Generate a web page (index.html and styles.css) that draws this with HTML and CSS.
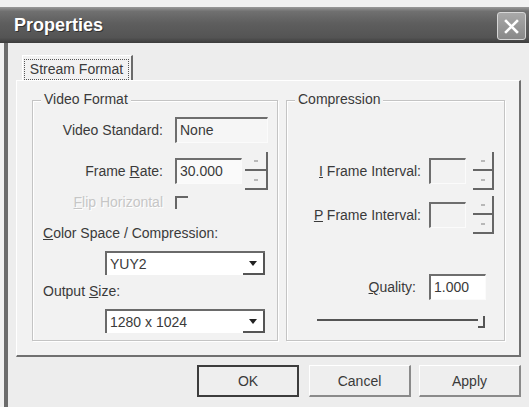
FILE: index.html
```html
<!DOCTYPE html>
<html>
<head>
<meta charset="utf-8">
<title>Properties</title>
<link rel="stylesheet" href="styles.css">
</head>
<body>
<div class="screen">
  <div class="titlebar">
    <span class="title">Properties</span>
    <button class="close" aria-label="Close">
      <svg width="17" height="17" viewBox="0 0 17 17"><path d="M3 3 L14 14 M14 3 L3 14" stroke="#fff" stroke-width="2.6" stroke-linecap="square"/></svg>
    </button>
  </div>
  <div class="frame">
    <div class="tabs">
      <div class="tab"><span class="focus">Stream Format</span></div>
    </div>
    <div class="panel">
      <div class="group video">
        <span class="legend">Video Format</span>
        <div class="vrow r1">
          <span class="vlabel">Video Standard:</span>
          <span class="edit readonly std">None</span>
        </div>
        <div class="vrow r2">
          <span class="vlabel">Frame <u>R</u>ate:</span>
          <span class="edit rate">30.000</span>
          <span class="spin big"><span></span><span></span></span>
        </div>
        <div class="vrow r3">
          <span class="vlabel disabled"><u>F</u>lip Horizontal</span>
          <span class="check"></span>
        </div>
        <div class="slabel first"><u>C</u>olor Space / Compression:</div>
        <div class="combo"><span class="ctext">YUY2</span><span class="cbtn"><svg width="8" height="5" viewBox="0 0 8 5"><path d="M0 0H8L4 5Z" fill="#222"/></svg></span></div>
        <div class="slabel">Output <u>S</u>ize:</div>
        <div class="combo"><span class="ctext">1280 x 1024</span><span class="cbtn"><svg width="8" height="5" viewBox="0 0 8 5"><path d="M0 0H8L4 5Z" fill="#222"/></svg></span></div>
      </div>
      <div class="group comp">
        <span class="legend">Compression</span>
        <div class="crow ri">
          <span class="clabel"><u>I</u> Frame Interval:</span>
          <span class="edit small disabledbox"></span>
          <span class="spin narrow"><span></span><span></span></span>
        </div>
        <div class="crow rp">
          <span class="clabel"><u>P</u> Frame Interval:</span>
          <span class="edit small disabledbox"></span>
          <span class="spin narrow"><span></span><span></span></span>
        </div>
        <div class="crow rq">
          <span class="clabel ql"><u>Q</u>uality:</span>
          <span class="edit quality">1.000</span>
        </div>
        <div class="slider"><span class="track"></span><span class="thumb"></span></div>
      </div>
    </div>
    <div class="buttons">
      <button class="btn default ok">OK</button>
      <button class="btn cancel">Cancel</button>
      <button class="btn">Apply</button>
    </div>
  </div>
</div>
</body>
</html>
```
FILE: styles.css
```css
* { box-sizing: border-box; }

body {
  margin: 0;
  width: 529px;
  height: 407px;
  overflow: hidden;
  background: #f1f1f1;
  font-family: "Liberation Sans", Arial, sans-serif;
  font-size: 14px;
  color: #3a3a3a;
}

.screen { padding-top: 7px; }

.titlebar {
  height: 36px;
  display: flex;
  align-items: center;
  justify-content: space-between;
  padding: 0 3px 0 14px;
  background: linear-gradient(#9a9a9a 0%, #707070 12%, #5e5e5e 45%, #545454 85%, #3c3c3c 100%);
}

.title {
  color: #fff;
  font-weight: bold;
  font-size: 18px;
  text-shadow: 1px 1px 0 #333;
}

.close {
  width: 29px;
  height: 28px;
  margin-top: 2px;
  padding: 0;
  border: 1px solid #d6d6d6;
  border-radius: 3px;
  background: linear-gradient(#a9a9a9, #888888);
  display: flex;
  align-items: center;
  justify-content: center;
}

.frame {
  height: 364px;
  margin-left: 4px;
  border-left: 4px solid #6c6c6c;
  background: #ededed;
  padding: 12px 8px 0 8px;
}

.tabs { display: flex; padding-left: 6px; }

.tab {
  width: 111px;
  height: 25px;
  border-top: 1px solid #fff;
  border-left: 1px solid #fff;
  border-right: 2px solid #6a6a6a;
  background: #f2f2f2;
  padding: 3px 2px 0 1px;
}

.focus {
  display: block;
  height: 21px;
  border: 1px dotted #555;
  line-height: 19px;
  text-align: center;
}

.panel {
  height: 277px;
  border-top: 1px solid #fff;
  border-left: 1px solid #fff;
  border-right: 2px solid #707070;
  border-bottom: 2px solid #707070;
  background: #f2f2f2;
  display: flex;
  gap: 8px;
  padding: 19px 14px 14px 15px;
}

.group {
  border: 1px solid #c4c4c4;
  box-shadow: inset 1px 1px 0 #fff, 1px 1px 0 #fff;
}
.group.video { width: 246px; }
.group.comp { flex: 1; }

.legend {
  display: block;
  width: fit-content;
  margin: -10px 0 0 8px;
  padding: 0 3px;
  line-height: 16px;
  background: #f2f2f2;
}

.vrow { display: flex; align-items: center; }
.vrow.r1 { margin-top: 10px; height: 26px; }
.vrow.r2 { margin-top: 9px; height: 38px; }
.vrow.r3 { height: 24px; }

.vlabel {
  width: 130px;
  margin-right: 12px;
  text-align: right;
}
.disabled { color: #c6c6c6; text-shadow: 1px 1px 0 #fff; }

.edit {
  height: 26px;
  border-top: 2px solid #6e6e6e;
  border-left: 2px solid #6e6e6e;
  border-right: 1px solid #fbfbfb;
  border-bottom: 1px solid #fbfbfb;
  background: #fafafa;
  padding-left: 3px;
  line-height: 22px;
}
.edit.std { width: 93px; background: #f6f6f6; }
.edit.rate { width: 67px; }
.edit.small { width: 37px; }
.edit.disabledbox { background: #f2f2f2; }
.edit.quality { width: 57px; background: #fff; }

.spin {
  display: flex;
  flex-direction: column;
  height: 38px;
}
.spin.big { width: 23px; margin-left: 3px; }
.spin.narrow { width: 21px; margin-left: 7px; }
.spin span {
  flex: 1;
  border-right: 2px solid #666;
  border-bottom: 2px solid #666;
  display: flex;
  align-items: center;
  justify-content: center;
}
.spin span::after {
  content: "";
  width: 4px;
  height: 2px;
  background: #b8b8b8;
}

.check {
  width: 13px;
  height: 13px;
  border-top: 2px solid #666;
  border-left: 2px solid #666;
}

.slabel { margin: 8px 0 0 10px; line-height: 16px; }
.slabel.first { margin-top: 11px; }

.combo {
  margin: 10px 0 0 72px;
  width: 160px;
  height: 24px;
  display: flex;
  border-top: 2px solid #6a6a6a;
  border-left: 2px solid #6a6a6a;
  background: #fff;
}
.ctext { flex: 1; padding-left: 3px; line-height: 22px; }
.cbtn {
  width: 22px;
  border-right: 2px solid #555;
  border-bottom: 2px solid #555;
  display: flex;
  align-items: center;
  justify-content: center;
}

.crow { display: flex; align-items: center; }
.crow.ri { margin-top: 45px; height: 38px; }
.crow.rp { margin-top: 6px; height: 38px; }
.crow.rq { margin-top: 40px; height: 26px; }

.clabel {
  width: 134px;
  margin-right: 8px;
  text-align: right;
}
.clabel.ql { padding-right: 5px; }

.slider {
  display: flex;
  margin: 14px 0 0 30px;
  width: 168px;
  height: 14px;
}
.track {
  flex: 1;
  height: 2px;
  margin-top: 5px;
  background: #555;
}
.thumb {
  width: 7px;
  height: 12px;
  align-self: flex-end;
  border-right: 2px solid #555;
  border-bottom: 2px solid #555;
}

.buttons {
  display: flex;
  justify-content: flex-end;
  margin-top: 8px;
}

.btn {
  width: 102px;
  height: 32px;
  padding: 0;
  background: #eeeeee;
  border-top: 1px solid #fff;
  border-left: 1px solid #fff;
  border-right: 2px solid #8a8a8a;
  border-bottom: 2px solid #8a8a8a;
  font-family: "Liberation Sans", Arial, sans-serif;
  font-size: 14px;
  color: #3a3a3a;
}
.btn.default { border: 2px solid #3c3c3c; }
.btn.ok { margin-right: 10px; }
.btn.cancel { margin-right: 8px; }
```
